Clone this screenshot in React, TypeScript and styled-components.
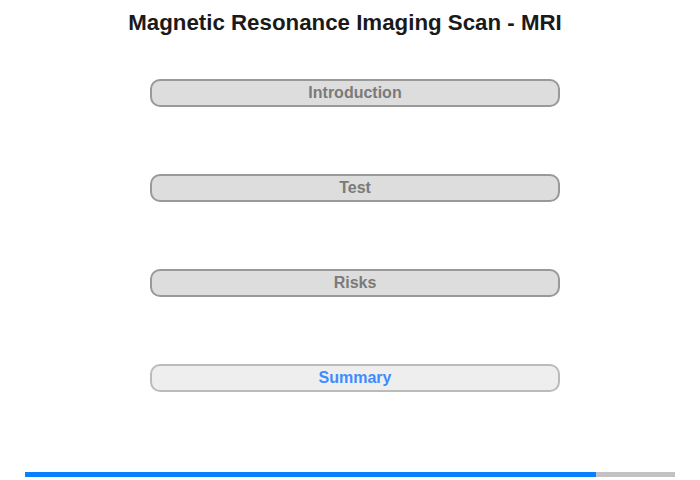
import React, { FC } from "react";
import styled, { createGlobalStyle } from "styled-components";

const GlobalStyle = createGlobalStyle`
  html, body {
    margin: 0;
    padding: 0;
    background: #fff;
    font-family: "Liberation Sans", Arial, sans-serif;
  }
`;

const Page = styled.div`
  width: 700px;
  height: 480px;
  display: flex;
  flex-direction: column;
  align-items: center;
  overflow: hidden;
`;

const Title = styled.h1`
  margin: 0;
  padding-top: 10px;
  font-size: 22.3px;
  line-height: 25px;
  font-weight: bold;
  color: #1a1a1a;
  text-align: center;
  width: 100%;
  padding-right: 10px;
  box-sizing: border-box;
`;

const Menu = styled.div`
  display: flex;
  flex-direction: column;
  gap: 67px;
  margin-top: 44px;
  margin-left: 10px;
  width: 410px;
`;

const MenuButton = styled.div<{ $active?: boolean }>`
  height: 28px;
  box-sizing: border-box;
  border: 2px solid ${(p) => (p.$active ? "#bbbbbb" : "#999999")};
  border-radius: 10px;
  background: ${(p) => (p.$active ? "#eeeeee" : "#dddddd")};
  color: ${(p) => (p.$active ? "#3d8cff" : "#7a7a7a")};
  font-size: 16px;
  font-weight: bold;
  display: flex;
  align-items: center;
  justify-content: center;
  cursor: pointer;
`;

const Progress = styled.div`
  margin-top: auto;
  margin-bottom: 3px;
  width: 650px;
  height: 5px;
  background: #c2c2c2;
  display: flex;
`;

const ProgressFill = styled.div`
  height: 100%;
  background: #0a80ff;
`;

const items = ["Introduction", "Test", "Risks", "Summary"];

const App: FC = () => {
  const done = 571 / 650;
  return (
    <>
      <GlobalStyle />
      <Page>
        <Title>Magnetic Resonance Imaging Scan - MRI</Title>
        <Menu>
          {items.map((item) => (
            <MenuButton key={item} $active={item === "Summary"}>
              {item}
            </MenuButton>
          ))}
        </Menu>
        <Progress>
          <ProgressFill style={{ width: `${done * 100}%` }} />
        </Progress>
      </Page>
    </>
  );
};

export default App;
